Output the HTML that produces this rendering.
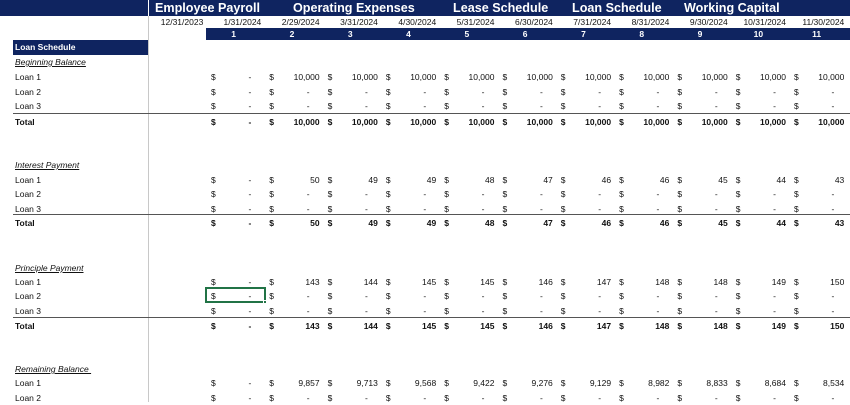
<!DOCTYPE html>
<html><head><meta charset="utf-8"><style>
*{margin:0;padding:0;box-sizing:border-box}
body{width:850px;height:402px;overflow:hidden;background:#fff;font-family:"Liberation Sans",sans-serif;font-size:8.5px;color:#111;position:relative}
.top{position:absolute;left:0;top:0;width:850px;height:16px;background:#0f2460}
.vl{position:absolute;left:148px;top:0;width:1px;height:402px;background:#c8c8c8}
.vw{position:absolute;left:148px;top:0;width:1px;height:16px;background:#fff}
.t{position:absolute;top:0;height:16px;line-height:16px;color:#fff;font-weight:bold;font-size:12.6px}
.band{position:absolute;left:206px;top:28px;width:644px;height:12px;background:#0f2460}
.r{position:absolute;left:0;height:14px;line-height:14px;width:850px}
.r span{position:absolute;text-align:right;width:58.3px;padding-right:3px}
.r s{text-decoration:none;position:absolute;left:5px}
.r span.d{padding-right:13px}
.lbl{position:absolute;left:15px}
.u{text-decoration:underline;font-style:italic}
.b{font-weight:bold}
.hl{position:absolute;left:13px;width:837px;height:1px;background:#555}
</style></head><body>
<div class="top"></div>
<div class="vl"></div><div class="vw"></div>
<div class="t" style="left:155px">Employee Payroll</div>
<div class="t" style="left:293px">Operating Expenses</div>
<div class="t" style="left:453px">Lease Schedule</div>
<div class="t" style="left:572px">Loan Schedule</div>
<div class="t" style="left:684px">Working Capital</div>
<div class="band"></div>
<div class="r" style="top:15px">
<span style="left:148px">12/31/2023</span><span style="left:206px">1/31/2024</span><span style="left:264.3px">2/29/2024</span><span style="left:322.6px">3/31/2024</span><span style="left:380.9px">4/30/2024</span><span style="left:439.2px">5/31/2024</span><span style="left:497.5px">6/30/2024</span><span style="left:555.8px">7/31/2024</span><span style="left:614.1px">8/31/2024</span><span style="left:672.4px">9/30/2024</span><span style="left:730.7px">10/31/2024</span><span style="left:789px">11/30/2024</span>
</div>
<div class="r b" style="top:27px;color:#fff">
<span style="left:206px;text-align:center">1</span><span style="left:264.3px;text-align:center">2</span><span style="left:322.6px;text-align:center">3</span><span style="left:380.9px;text-align:center">4</span><span style="left:439.2px;text-align:center">5</span><span style="left:497.5px;text-align:center">6</span><span style="left:555.8px;text-align:center">7</span><span style="left:614.1px;text-align:center">8</span><span style="left:672.4px;text-align:center">9</span><span style="left:730.7px;text-align:center">10</span><span style="left:789px;text-align:center">11</span>
</div>
<div style="position:absolute;left:13px;top:40px;width:135px;height:15px;background:#0f2460;color:#fff;font-weight:bold;line-height:15px;padding-left:2px">Loan Schedule</div>

<div class="r" style="top:55px"><div class="lbl u">Beginning Balance</div></div>
<div class="r" style="top:70px"><div class="lbl">Loan 1</div><span class="d" style="left:206px"><s>$</s>-</span><span style="left:264.3px"><s>$</s>10,000</span><span style="left:322.6px"><s>$</s>10,000</span><span style="left:380.9px"><s>$</s>10,000</span><span style="left:439.2px"><s>$</s>10,000</span><span style="left:497.5px"><s>$</s>10,000</span><span style="left:555.8px"><s>$</s>10,000</span><span style="left:614.1px"><s>$</s>10,000</span><span style="left:672.4px"><s>$</s>10,000</span><span style="left:730.7px"><s>$</s>10,000</span><span style="left:789px"><s>$</s>10,000</span></div>
<div class="r" style="top:85px"><div class="lbl">Loan 2</div><span class="d" style="left:206px"><s>$</s>-</span><span class="d" style="left:264.3px"><s>$</s>-</span><span class="d" style="left:322.6px"><s>$</s>-</span><span class="d" style="left:380.9px"><s>$</s>-</span><span class="d" style="left:439.2px"><s>$</s>-</span><span class="d" style="left:497.5px"><s>$</s>-</span><span class="d" style="left:555.8px"><s>$</s>-</span><span class="d" style="left:614.1px"><s>$</s>-</span><span class="d" style="left:672.4px"><s>$</s>-</span><span class="d" style="left:730.7px"><s>$</s>-</span><span class="d" style="left:789px"><s>$</s>-</span></div>
<div class="r" style="top:99px"><div class="lbl">Loan 3</div><span class="d" style="left:206px"><s>$</s>-</span><span class="d" style="left:264.3px"><s>$</s>-</span><span class="d" style="left:322.6px"><s>$</s>-</span><span class="d" style="left:380.9px"><s>$</s>-</span><span class="d" style="left:439.2px"><s>$</s>-</span><span class="d" style="left:497.5px"><s>$</s>-</span><span class="d" style="left:555.8px"><s>$</s>-</span><span class="d" style="left:614.1px"><s>$</s>-</span><span class="d" style="left:672.4px"><s>$</s>-</span><span class="d" style="left:730.7px"><s>$</s>-</span><span class="d" style="left:789px"><s>$</s>-</span></div>
<div class="hl" style="top:113px"></div>
<div class="r b" style="top:115px"><div class="lbl">Total</div><span class="d" style="left:206px"><s>$</s>-</span><span style="left:264.3px"><s>$</s>10,000</span><span style="left:322.6px"><s>$</s>10,000</span><span style="left:380.9px"><s>$</s>10,000</span><span style="left:439.2px"><s>$</s>10,000</span><span style="left:497.5px"><s>$</s>10,000</span><span style="left:555.8px"><s>$</s>10,000</span><span style="left:614.1px"><s>$</s>10,000</span><span style="left:672.4px"><s>$</s>10,000</span><span style="left:730.7px"><s>$</s>10,000</span><span style="left:789px"><s>$</s>10,000</span></div>

<div class="r" style="top:158px"><div class="lbl u">Interest Payment</div></div>
<div class="r" style="top:173px"><div class="lbl">Loan 1</div><span class="d" style="left:206px"><s>$</s>-</span><span style="left:264.3px"><s>$</s>50</span><span style="left:322.6px"><s>$</s>49</span><span style="left:380.9px"><s>$</s>49</span><span style="left:439.2px"><s>$</s>48</span><span style="left:497.5px"><s>$</s>47</span><span style="left:555.8px"><s>$</s>46</span><span style="left:614.1px"><s>$</s>46</span><span style="left:672.4px"><s>$</s>45</span><span style="left:730.7px"><s>$</s>44</span><span style="left:789px"><s>$</s>43</span></div>
<div class="r" style="top:187px"><div class="lbl">Loan 2</div><span class="d" style="left:206px"><s>$</s>-</span><span class="d" style="left:264.3px"><s>$</s>-</span><span class="d" style="left:322.6px"><s>$</s>-</span><span class="d" style="left:380.9px"><s>$</s>-</span><span class="d" style="left:439.2px"><s>$</s>-</span><span class="d" style="left:497.5px"><s>$</s>-</span><span class="d" style="left:555.8px"><s>$</s>-</span><span class="d" style="left:614.1px"><s>$</s>-</span><span class="d" style="left:672.4px"><s>$</s>-</span><span class="d" style="left:730.7px"><s>$</s>-</span><span class="d" style="left:789px"><s>$</s>-</span></div>
<div class="r" style="top:202px"><div class="lbl">Loan 3</div><span class="d" style="left:206px"><s>$</s>-</span><span class="d" style="left:264.3px"><s>$</s>-</span><span class="d" style="left:322.6px"><s>$</s>-</span><span class="d" style="left:380.9px"><s>$</s>-</span><span class="d" style="left:439.2px"><s>$</s>-</span><span class="d" style="left:497.5px"><s>$</s>-</span><span class="d" style="left:555.8px"><s>$</s>-</span><span class="d" style="left:614.1px"><s>$</s>-</span><span class="d" style="left:672.4px"><s>$</s>-</span><span class="d" style="left:730.7px"><s>$</s>-</span><span class="d" style="left:789px"><s>$</s>-</span></div>
<div class="hl" style="top:214px"></div>
<div class="r b" style="top:216px"><div class="lbl">Total</div><span class="d" style="left:206px"><s>$</s>-</span><span style="left:264.3px"><s>$</s>50</span><span style="left:322.6px"><s>$</s>49</span><span style="left:380.9px"><s>$</s>49</span><span style="left:439.2px"><s>$</s>48</span><span style="left:497.5px"><s>$</s>47</span><span style="left:555.8px"><s>$</s>46</span><span style="left:614.1px"><s>$</s>46</span><span style="left:672.4px"><s>$</s>45</span><span style="left:730.7px"><s>$</s>44</span><span style="left:789px"><s>$</s>43</span></div>

<div class="r" style="top:261px"><div class="lbl u">Principle Payment</div></div>
<div class="r" style="top:275px"><div class="lbl">Loan 1</div><span class="d" style="left:206px"><s>$</s>-</span><span style="left:264.3px"><s>$</s>143</span><span style="left:322.6px"><s>$</s>144</span><span style="left:380.9px"><s>$</s>145</span><span style="left:439.2px"><s>$</s>145</span><span style="left:497.5px"><s>$</s>146</span><span style="left:555.8px"><s>$</s>147</span><span style="left:614.1px"><s>$</s>148</span><span style="left:672.4px"><s>$</s>148</span><span style="left:730.7px"><s>$</s>149</span><span style="left:789px"><s>$</s>150</span></div>
<div class="r" style="top:289px"><div class="lbl">Loan 2</div><span class="d" style="left:206px"><s>$</s>-</span><span class="d" style="left:264.3px"><s>$</s>-</span><span class="d" style="left:322.6px"><s>$</s>-</span><span class="d" style="left:380.9px"><s>$</s>-</span><span class="d" style="left:439.2px"><s>$</s>-</span><span class="d" style="left:497.5px"><s>$</s>-</span><span class="d" style="left:555.8px"><s>$</s>-</span><span class="d" style="left:614.1px"><s>$</s>-</span><span class="d" style="left:672.4px"><s>$</s>-</span><span class="d" style="left:730.7px"><s>$</s>-</span><span class="d" style="left:789px"><s>$</s>-</span></div>
<div style="position:absolute;left:205px;top:287px;width:61px;height:16px;border:2px solid #217346"></div>
<div style="position:absolute;left:263px;top:300px;width:4px;height:4px;background:#217346;border:1px solid #fff"></div>
<div class="r" style="top:304px"><div class="lbl">Loan 3</div><span class="d" style="left:206px"><s>$</s>-</span><span class="d" style="left:264.3px"><s>$</s>-</span><span class="d" style="left:322.6px"><s>$</s>-</span><span class="d" style="left:380.9px"><s>$</s>-</span><span class="d" style="left:439.2px"><s>$</s>-</span><span class="d" style="left:497.5px"><s>$</s>-</span><span class="d" style="left:555.8px"><s>$</s>-</span><span class="d" style="left:614.1px"><s>$</s>-</span><span class="d" style="left:672.4px"><s>$</s>-</span><span class="d" style="left:730.7px"><s>$</s>-</span><span class="d" style="left:789px"><s>$</s>-</span></div>
<div class="hl" style="top:317px"></div>
<div class="r b" style="top:319px"><div class="lbl">Total</div><span class="d" style="left:206px"><s>$</s>-</span><span style="left:264.3px"><s>$</s>143</span><span style="left:322.6px"><s>$</s>144</span><span style="left:380.9px"><s>$</s>145</span><span style="left:439.2px"><s>$</s>145</span><span style="left:497.5px"><s>$</s>146</span><span style="left:555.8px"><s>$</s>147</span><span style="left:614.1px"><s>$</s>148</span><span style="left:672.4px"><s>$</s>148</span><span style="left:730.7px"><s>$</s>149</span><span style="left:789px"><s>$</s>150</span></div>

<div class="r" style="top:362px"><div class="lbl u">Remaining Balance&nbsp;</div></div>
<div class="r" style="top:376px"><div class="lbl">Loan 1</div><span class="d" style="left:206px"><s>$</s>-</span><span style="left:264.3px"><s>$</s>9,857</span><span style="left:322.6px"><s>$</s>9,713</span><span style="left:380.9px"><s>$</s>9,568</span><span style="left:439.2px"><s>$</s>9,422</span><span style="left:497.5px"><s>$</s>9,276</span><span style="left:555.8px"><s>$</s>9,129</span><span style="left:614.1px"><s>$</s>8,982</span><span style="left:672.4px"><s>$</s>8,833</span><span style="left:730.7px"><s>$</s>8,684</span><span style="left:789px"><s>$</s>8,534</span></div>
<div class="r" style="top:391px"><div class="lbl">Loan 2</div><span class="d" style="left:206px"><s>$</s>-</span><span class="d" style="left:264.3px"><s>$</s>-</span><span class="d" style="left:322.6px"><s>$</s>-</span><span class="d" style="left:380.9px"><s>$</s>-</span><span class="d" style="left:439.2px"><s>$</s>-</span><span class="d" style="left:497.5px"><s>$</s>-</span><span class="d" style="left:555.8px"><s>$</s>-</span><span class="d" style="left:614.1px"><s>$</s>-</span><span class="d" style="left:672.4px"><s>$</s>-</span><span class="d" style="left:730.7px"><s>$</s>-</span><span class="d" style="left:789px"><s>$</s>-</span></div>
</body></html>
